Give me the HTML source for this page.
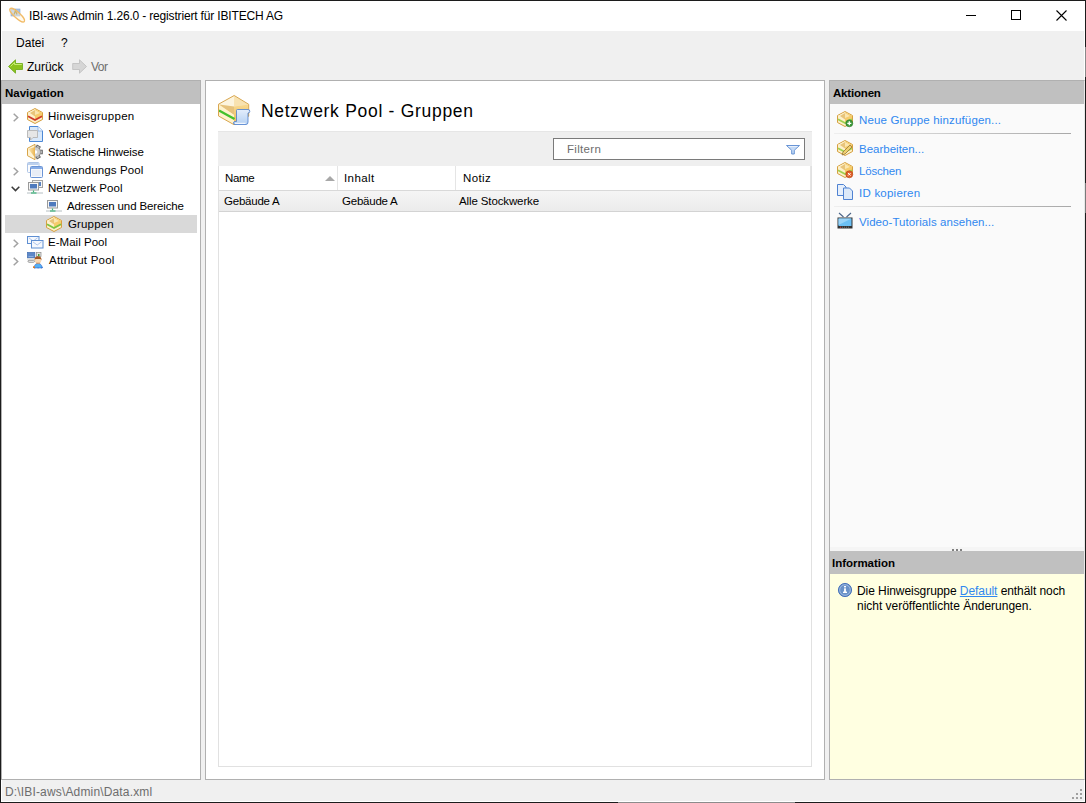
<!DOCTYPE html>
<html><head><meta charset="utf-8">
<style>
*{box-sizing:border-box;margin:0;padding:0}
html,body{width:1086px;height:803px;overflow:hidden;background:#f0f0f0;font-family:"Liberation Sans",sans-serif;color:#000;position:relative}
.a{position:absolute}
.t{position:absolute;white-space:nowrap;line-height:14px}
svg{position:absolute;overflow:visible}
.chev{position:absolute}
</style></head><body>
<svg width="0" height="0" style="left:0;top:0">
<defs>
 <linearGradient id="gold" x1="0" y1="0" x2="0" y2="1"><stop offset="0" stop-color="#fff6d8"/><stop offset="1" stop-color="#f3c86a"/></linearGradient>
 <linearGradient id="rowg" x1="0" y1="0" x2="0" y2="1"><stop offset="0" stop-color="#f6f6f6"/><stop offset="1" stop-color="#ebebeb"/></linearGradient>
 <linearGradient id="infog" x1="0" y1="0" x2="0" y2="1"><stop offset="0" stop-color="#8fb0dc"/><stop offset="1" stop-color="#3f6fb5"/></linearGradient>
 <g id="box">
  <path d="M8 0.5L15.5 4.5V11.5L8 15.5L0.5 11.5V4.5Z" fill="#fdf0c8" stroke="#d6a040" stroke-width="1"/>
  <path d="M1 4.8L8 1.2L8 8.5L1 9Z" fill="#fdf0cc"/>
  <path d="M3 5L8 2V8.5Z" fill="#e8c47a"/>
  <path d="M8 1.2L15 4.8V9L8 12.5Z" fill="#f6cc6c"/>
  <path d="M8 2L13 5L8 7Z" fill="#fbe6b0"/>
 </g>
</defs>
</svg>
<!-- window frame -->
<div class="a" style="left:0;top:0;width:1086px;height:803px;border:1px solid #1c1c1c"></div>
<div class="a" style="left:1px;top:1px;width:1084px;height:801px;border:1px solid #fff;border-top:none"></div>
<div class="a" style="left:1085px;top:47px;width:1px;height:30px;background:#8a8a8a"></div>
<div class="a" style="left:618px;top:802px;width:177px;height:1px;background:#8c8c8c"></div>
<div class="a" style="left:1085px;top:183px;width:1px;height:30px;background:#7a7a7a"></div>
<!-- title bar -->
<div class="a" style="left:1px;top:1px;width:1084px;height:30px;background:#fff"></div>
<!-- app icon -->
<svg style="left:9px;top:7px" width="16" height="16">
 <rect x="2" y="2" width="9" height="7" fill="#a8c4e6" stroke="#88a8d4" stroke-width="0.6"/>
 <path d="M5 7.5L6.5 3.5L8 7.5" fill="none" stroke="#9c7c18" stroke-width="1.2"/>
 <ellipse cx="8.2" cy="8.2" rx="9.6" ry="2.9" transform="rotate(42 8.2 8.2)" fill="#fff3dc" fill-opacity="0.45" stroke="#f2bc68" stroke-width="1.3"/>
</svg>
<!-- window buttons -->
<div class="a" style="left:966px;top:15px;width:10px;height:1px;background:#000"></div>
<div class="a" style="left:1011px;top:10px;width:10px;height:10px;border:1px solid #000"></div>
<svg style="left:1056px;top:10px" width="11" height="11"><path d="M0.5 0.5L10.5 10.5M10.5 0.5L0.5 10.5" stroke="#000" stroke-width="1.1"/></svg>

<!-- toolbar icons -->
<svg style="left:8px;top:59px" width="16" height="16">
 <path d="M0.5 7.5L7.5 0.8V4.5H14.5V10.5H7.5V14.2Z" fill="#8cc21e" stroke="#6aa814" stroke-width="0.8" stroke-linejoin="round"/>
 <path d="M2.5 7.5L6.5 3.5V5.5H13.8" fill="none" stroke="#c8ec70" stroke-width="1"/>
</svg>
<svg style="left:72px;top:59px" width="16" height="16">
 <path d="M14.5 7.5L7.5 0.8V4.5H0.7V10.5H7.5V14.2Z" fill="#d6d6d6" stroke="#bcbcbc" stroke-width="0.8" stroke-linejoin="round"/>
</svg>

<!-- LEFT PANEL -->
<div class="a" style="left:1px;top:80px;width:200px;height:700px;border:1px solid #b0b0b0;background:#fff"></div>
<div class="a" style="left:2px;top:81px;width:198px;height:23px;background:#c0c0c0"></div>
<!-- selection -->
<div class="a" style="left:5px;top:215px;width:192px;height:18px;background:#d9d9d9"></div>

<!-- CENTER PANEL -->
<div class="a" style="left:205px;top:80px;width:620px;height:700px;border:1px solid #b0b0b0;background:#fff"></div>
<!-- filter bar -->
<div class="a" style="left:218px;top:131px;width:594px;height:35px;background:#efefef;border-top:1px solid #e6e6e6"></div>
<div class="a" style="left:553px;top:138px;width:252px;height:22px;background:#fff;border:1px solid #7a7a7a"></div>
<!-- list -->
<div class="a" style="left:218px;top:166px;width:594px;height:601px;background:#fff;border:1px solid #e1e1e1;border-top:none"></div>
<div class="a" style="left:219px;top:190px;width:592px;height:1px;background:#d9d9d9"></div>
<div class="a" style="left:337px;top:166px;width:1px;height:24px;background:#e5e5e5"></div>
<div class="a" style="left:455px;top:166px;width:1px;height:24px;background:#e5e5e5"></div>
<div class="a" style="left:810px;top:166px;width:1px;height:24px;background:#e5e5e5"></div>
<div class="a" style="left:219px;top:191px;width:592px;height:20px;background:linear-gradient(#f5f5f5,#ebebeb)"></div>
<div class="a" style="left:219px;top:211px;width:592px;height:1px;background:#d3d3d3"></div>

<!-- RIGHT PANEL -->
<div class="a" style="left:829px;top:80px;width:256px;height:700px;border:1px solid #b0b0b0;border-right:1px solid #e8e8e8;background:#fafafa"></div>
<div class="a" style="left:830px;top:81px;width:254px;height:23px;background:#c0c0c0"></div>
<div class="a" style="left:834px;top:133px;width:237px;height:1px;background:linear-gradient(to right,#efefef,#cdcdcd 45%,#a8a8a8)"></div>
<div class="a" style="left:834px;top:206px;width:237px;height:1px;background:linear-gradient(to right,#efefef,#cdcdcd 45%,#a8a8a8)"></div>
<div class="a" style="left:830px;top:547px;width:254px;height:4px;background:#f5f5f5"></div>
<div class="a" style="left:952px;top:549px;width:2px;height:2px;background:#808080"></div>
<div class="a" style="left:956px;top:549px;width:2px;height:2px;background:#808080"></div>
<div class="a" style="left:960px;top:549px;width:2px;height:2px;background:#808080"></div>
<div class="a" style="left:830px;top:551px;width:254px;height:23px;background:#c0c0c0"></div>
<div class="a" style="left:830px;top:574px;width:254px;height:205px;background:#ffffe1"></div>


<!-- TREE -->
<svg style="left:13px;top:113px" width="6" height="9"><path d="M0.7 0.7L4.7 4.5L0.7 8.3" fill="none" stroke="#a2a2a2" stroke-width="1.5"/></svg>
<svg style="left:13px;top:167px" width="6" height="9"><path d="M0.7 0.7L4.7 4.5L0.7 8.3" fill="none" stroke="#a2a2a2" stroke-width="1.5"/></svg>
<svg style="left:11px;top:186px" width="9" height="6"><path d="M0.7 0.7L4.5 4.6L8.3 0.7" fill="none" stroke="#3c3c3c" stroke-width="1.5"/></svg>
<svg style="left:13px;top:239px" width="6" height="9"><path d="M0.7 0.7L4.7 4.5L0.7 8.3" fill="none" stroke="#a2a2a2" stroke-width="1.5"/></svg>
<svg style="left:13px;top:257px" width="6" height="9"><path d="M0.7 0.7L4.7 4.5L0.7 8.3" fill="none" stroke="#a2a2a2" stroke-width="1.5"/></svg>

<!-- Hinweisgruppen box red -->
<svg style="left:27px;top:108px" width="16" height="16">
 <use href="#box"/>
 <path d="M1 8.3L8 12L15 8.3" fill="none" stroke="#cf3a2a" stroke-width="1.8"/>
</svg>
<!-- Vorlagen -->
<svg style="left:27px;top:126px" width="16" height="16">
 <path d="M2.5 0.5H11L15.5 5V15.5H2.5Z" fill="#d8e8fa" stroke="#4c88d6" stroke-width="1"/>
 <path d="M11 0.5V5H15.5" fill="#eef4fc" stroke="#7aa4e0" stroke-width="0.7"/>
 <path d="M0.5 4.5H10.5V11.5H6L3.5 14V11.5H0.5Z" fill="#e6e6e6" stroke="#b4b4b4" stroke-width="0.9"/>
</svg>
<!-- Statische Hinweise -->
<svg style="left:27px;top:144px" width="16" height="16">
 <defs><clipPath id="rh"><rect x="8" y="-1" width="10" height="18"/></clipPath>
 <linearGradient id="sg" x1="0" y1="0" x2="1" y2="0"><stop offset="0" stop-color="#fbe8b8"/><stop offset="1" stop-color="#eab450"/></linearGradient></defs>
 <path d="M8 0.3L0.5 4.3V11.7L8 15.7Z" fill="#fff4d6" stroke="#d8a448" stroke-width="1"/>
 <path d="M1.3 5L8 3V13.5Z" fill="url(#sg)"/>
 <g clip-path="url(#rh)">
  <g fill="#c4c4c4" stroke="#5e5e5e" stroke-width="0.9">
   <rect x="12" y="6.2" width="3.3" height="3.6" transform="rotate(-62 8.5 8)"/>
   <rect x="12" y="6.2" width="3.3" height="3.6"/>
   <rect x="12" y="6.2" width="3.3" height="3.6" transform="rotate(62 8.5 8)"/>
  </g>
  <circle cx="8.5" cy="8" r="5" fill="#cfcfcf" stroke="#8a8a8a" stroke-width="0.7"/>
  <circle cx="8.5" cy="8" r="1.8" fill="#fff"/>
 </g>
</svg>
<!-- Anwendungs Pool -->
<svg style="left:27px;top:162px" width="16" height="16">
 <rect x="0.5" y="0.5" width="11.5" height="10" rx="1" fill="#fbfcfe" stroke="#adc4e6" stroke-width="1"/>
 <rect x="1" y="1" width="10.5" height="2" fill="#bdd1ee"/>
 <rect x="3.5" y="4.5" width="12" height="11" rx="1" fill="#f6f8fc" stroke="#6a94d6" stroke-width="1"/>
 <rect x="4" y="5" width="11" height="2" fill="#88ade6"/>
 <rect x="5" y="8" width="9" height="6" fill="#e8edf6"/>
</svg>
<!-- Netzwerk Pool -->
<svg style="left:27px;top:180px" width="16" height="16">
 <rect x="5.5" y="0.5" width="10" height="7" fill="#f6f6f6" stroke="#a4a4a4" stroke-width="1"/>
 <rect x="7" y="2" width="7" height="4" fill="#5a84c4"/>
 <rect x="1.5" y="2.5" width="10" height="7.5" fill="#f6f6f6" stroke="#9a9a9a" stroke-width="1"/>
 <rect x="3" y="4" width="7" height="4.5" fill="#4f7abd"/>
 <path d="M6.5 10.5V12.5" stroke="#3fb27a" stroke-width="1.2"/>
 <path d="M0 13H16" stroke="#b4bec2" stroke-width="1"/>
 <path d="M4 13H9.5" stroke="#3fb27a" stroke-width="1.2"/>
</svg>
<!-- Adressen -->
<svg style="left:46px;top:198px" width="16" height="16">
 <rect x="1.5" y="2.5" width="10" height="7.5" fill="#f6f6f6" stroke="#9a9a9a" stroke-width="1"/>
 <rect x="3" y="4" width="7" height="4.5" fill="#4f7abd"/>
 <path d="M6.5 10.5V12.5" stroke="#3fb27a" stroke-width="1.2"/>
 <path d="M0 13H16" stroke="#b4bec2" stroke-width="1"/>
 <path d="M4 13H9.5" stroke="#3fb27a" stroke-width="1.2"/>
</svg>
<!-- Gruppen -->
<svg style="left:46px;top:216px" width="16" height="16">
 <use href="#box"/>
 <path d="M1 8.3L8 12L15 8.3" fill="none" stroke="#7cc440" stroke-width="1.8"/>
</svg>
<!-- E-Mail Pool -->
<svg style="left:27px;top:234px" width="16" height="16">
 <rect x="0.5" y="2.5" width="11.5" height="7" fill="#f6f9fe" stroke="#5f8fd2" stroke-width="1"/>
 <path d="M1.8 3.8L6.2 7L10.6 3.8" fill="none" stroke="#9ab8e6" stroke-width="0.8"/>
 <rect x="4.5" y="6.5" width="11.5" height="7.5" fill="#f6f9fe" stroke="#5f8fd2" stroke-width="1"/>
 <path d="M5.8 7.8L10.2 11L14.6 7.8" fill="none" stroke="#9ab8e6" stroke-width="0.8"/>
</svg>
<!-- Attribut Pool -->
<svg style="left:27px;top:252px" width="16" height="16">
 <rect x="0.3" y="0.3" width="7.6" height="5.6" fill="#5d88c8" stroke="#3f6cb0" stroke-width="0.6"/>
 <rect x="1.5" y="4" width="5" height="0.8" fill="#9ab8e4"/>
 <rect x="0" y="6.3" width="7" height="1.4" fill="#dcdcdc"/>
 <path d="M2 8.3H6.5Q7.5 8.3 7.5 9.3Q7.5 10.3 6.5 10.3H2Q1 10.3 1 9.3Q1 8.3 2 8.3Z" fill="#eee" stroke="#888" stroke-width="0.8"/>
 <rect x="9.5" y="0.5" width="4.5" height="4" fill="#e4e4e4" stroke="#8a8a8a" stroke-width="0.7"/>
 <rect x="11" y="2" width="1.5" height="2" fill="#3aa040"/>
 <path d="M7 16Q7.5 11.5 11 11.5Q14.5 11.5 15.5 16Z" fill="#55b0f4" stroke="#1f4fc0" stroke-width="0.9" stroke-dasharray="0.9 0.5"/>
 <rect x="6" y="14.3" width="1.8" height="1.7" fill="#e07a20"/>
 <circle cx="11" cy="8.2" r="3.2" fill="#f8d8b4"/>
 <path d="M7.5 8.5Q7.3 4.3 11 4.3Q14.7 4.3 14.5 8.5L13.5 7H8.5Z" fill="#a45a24"/>
 <path d="M9 11.2H13" stroke="#c08050" stroke-width="0.8"/>
</svg>

<!-- BIG ICON -->
<svg style="left:218px;top:95px" width="32" height="32">
 <defs><linearGradient id="bgold" x1="0" y1="0" x2="0" y2="1"><stop offset="0" stop-color="#f7d890"/><stop offset="1" stop-color="#efbe58"/></linearGradient>
 <linearGradient id="bdoc" x1="0" y1="0" x2="0" y2="1"><stop offset="0" stop-color="#e4eefc"/><stop offset="1" stop-color="#b4d0f2"/></linearGradient></defs>
 <path d="M16.2 0.5L30.7 9.3V21.2L16 29.7L0.5 21V9.2Z" fill="#fdf0c8"/>
 <path d="M1 9.3L16.2 1L16 11.5Z" fill="#fcf4de"/>
 <path d="M16.2 1L30.3 9.5L16 11.5Z" fill="#f8e2b0"/>
 <path d="M1 9.5L16 11.5L16 20Z" fill="#e6c27c"/>
 <path d="M16 11.5L30.3 9.5V21L16 29.3Z" fill="url(#bgold)"/>
 <path d="M1 10L16 20V29.3L1 20.8Z" fill="#fff2cc"/>
 <path d="M1 15.5L16.5 24" stroke="#44c02c" stroke-width="2.4"/>
 <path d="M16.2 0.5L30.7 9.3V21.2L16 29.7L0.5 21V9.2Z" fill="none" stroke="#d8a650" stroke-width="1"/>
 <path d="M19.5 14.5H30Q31.8 14.5 31.8 16.3Q31.8 18 30 18V27Q30 29.5 28 29.5H17Q15.5 29.5 15.5 28Q15.5 26.5 17 26.5H18.5V15.5Q18.5 14.5 19.5 14.5Z" fill="url(#bdoc)" stroke="#4a7ccc" stroke-width="0.8"/>
 <path d="M17 28.3H27.5" stroke="#fff" stroke-width="1"/>
</svg>

<!-- funnel -->
<svg style="left:786px;top:145px" width="14" height="10">
 <path d="M0.5 0.5H13.5L8.3 5.3V9H5.7V5.3Z" fill="#c4daf6" stroke="#5a8ad0" stroke-width="0.9" stroke-linejoin="round"/>
 <path d="M2.5 1.5H11.5" stroke="#e8f0fc" stroke-width="1"/>
</svg>
<!-- sort arrow -->
<svg style="left:325px;top:176px" width="10" height="5"><path d="M0 5H10L5 0Z" fill="#a8a8a8"/></svg>

<!-- ACTION ICONS -->
<svg style="left:837px;top:111px" width="16" height="16">
 <use href="#box"/>
 <path d="M1 8.3L8 12L15 8.3" fill="none" stroke="#9fd050" stroke-width="1.8"/>
 <circle cx="12.3" cy="12.3" r="3.5" fill="#3e9a3a" stroke="#2a7a2a" stroke-width="0.6"/>
 <path d="M12.3 10.3V14.3M10.3 12.3H14.3" stroke="#fff" stroke-width="1.3"/>
</svg>
<svg style="left:837px;top:140px" width="16" height="16">
 <use href="#box"/>
 <path d="M1 8.3L8 12L15 8.3" fill="none" stroke="#9fd050" stroke-width="1.8"/>
 <path d="M5 15L6 12L13 5L15 7L8 14Z" fill="#f0d070" stroke="#8a6a30" stroke-width="0.7"/>
</svg>
<svg style="left:837px;top:162px" width="16" height="16">
 <use href="#box"/>
 <path d="M1 8.3L8 12L15 8.3" fill="none" stroke="#9fd050" stroke-width="1.8"/>
 <circle cx="12.3" cy="12.3" r="3.5" fill="#e0602a" stroke="#b04010" stroke-width="0.6"/>
 <path d="M11 11L13.6 13.6M13.6 11L11 13.6" stroke="#fff" stroke-width="1"/>
</svg>
<svg style="left:837px;top:184px" width="16" height="16">
 <path d="M0.5 0.5H6.5L9 3V11.5H0.5Z" fill="#e6effb" stroke="#4f82d2" stroke-width="1"/>
 <path d="M6.5 4H12.5L15.5 7V15.5H6.5Z" fill="#dce9f9" stroke="#4f82d2" stroke-width="1"/>
</svg>
<svg style="left:837px;top:213px" width="16" height="16">
 <path d="M2 0L6.5 4M14 0L9.5 4" fill="none" stroke="#4a6488" stroke-width="1.1"/>
 <rect x="0.5" y="4.5" width="15" height="11" fill="#333"/>
 <rect x="1.5" y="5.5" width="13" height="7.5" fill="#6cc0f4"/>
 <path d="M1.5 5.5H14.5L1.5 12Z" fill="#9ad4f8"/>
 <path d="M3 14.2H13" stroke="#888" stroke-width="0.8" stroke-dasharray="1 1"/>
 <rect x="3" y="13.8" width="1.2" height="0.9" fill="#e02020"/>
</svg>

<!-- info icon -->
<svg style="left:838px;top:583px" width="14" height="14">
 <circle cx="7" cy="7" r="6.6" fill="#6a92c8" stroke="#3d6ab8" stroke-width="0.9"/>
 <circle cx="7" cy="7" r="5.3" fill="none" stroke="#a9c3e6" stroke-width="0.8"/>
 <rect x="6" y="3" width="2" height="1.4" fill="#fff"/>
 <rect x="6.1" y="5.3" width="1.8" height="3.8" fill="#fff"/>
 <rect x="5" y="8.6" width="4" height="1.4" fill="#fff"/>
</svg>

<!-- resize grip -->
<svg style="left:1072px;top:789px" width="12" height="12">
 <g fill="#a0a0a0">
 <rect x="8" y="0" width="2" height="2"/>
 <rect x="4" y="4" width="2" height="2"/><rect x="8" y="4" width="2" height="2"/>
 <rect x="0" y="8" width="2" height="2"/><rect x="4" y="8" width="2" height="2"/><rect x="8" y="8" width="2" height="2"/>
 </g>
</svg>

<div class="t" style="left:29.00px;top:9.00px;font-size:12px;font-weight:400;color:#000;letter-spacing:-0.165px;">IBI-aws Admin 1.26.0 - registriert für IBITECH AG</div>
<div class="t" style="left:16.00px;top:36.00px;font-size:12px;font-weight:400;color:#000;letter-spacing:0.025px;">Datei</div>
<div class="t" style="left:61.00px;top:36.00px;font-size:12px;font-weight:400;color:#000;letter-spacing:-0.400px;">?</div>
<div class="t" style="left:27.00px;top:60.00px;font-size:12px;font-weight:400;color:#000;letter-spacing:-0.020px;">Zurück</div>
<div class="t" style="left:91.00px;top:60.00px;font-size:12px;font-weight:400;color:#6d6d6d;letter-spacing:-0.500px;">Vor</div>
<div class="t" style="left:5.00px;top:86.00px;font-size:11.5px;font-weight:700;color:#000;letter-spacing:-0.011px;">Navigation</div>
<div class="t" style="left:48.00px;top:109.00px;font-size:11.5px;font-weight:400;color:#000;letter-spacing:0.292px;">Hinweisgruppen</div>
<div class="t" style="left:49.00px;top:127.00px;font-size:11.5px;font-weight:400;color:#000;letter-spacing:-0.043px;">Vorlagen</div>
<div class="t" style="left:48.00px;top:145.00px;font-size:11.5px;font-weight:400;color:#000;letter-spacing:-0.076px;">Statische Hinweise</div>
<div class="t" style="left:49.00px;top:163.00px;font-size:11.5px;font-weight:400;color:#000;letter-spacing:0.114px;">Anwendungs Pool</div>
<div class="t" style="left:48.00px;top:181.00px;font-size:11.5px;font-weight:400;color:#000;letter-spacing:0.025px;">Netzwerk Pool</div>
<div class="t" style="left:67.00px;top:199.00px;font-size:11.5px;font-weight:400;color:#000;letter-spacing:-0.130px;">Adressen und Bereiche</div>
<div class="t" style="left:68.00px;top:217.00px;font-size:11.5px;font-weight:400;color:#000;letter-spacing:0.150px;">Gruppen</div>
<div class="t" style="left:48.00px;top:235.00px;font-size:11.5px;font-weight:400;color:#000;letter-spacing:0.030px;">E-Mail Pool</div>
<div class="t" style="left:49.00px;top:253.00px;font-size:11.5px;font-weight:400;color:#000;letter-spacing:0.225px;">Attribut Pool</div>
<div class="t" style="left:261.00px;top:104.00px;font-size:17.5px;font-weight:400;color:#000;letter-spacing:0.705px;">Netzwerk Pool - Gruppen</div>
<div class="t" style="left:567.00px;top:142.00px;font-size:11.5px;font-weight:400;color:#6d6d6d;letter-spacing:0.317px;">Filtern</div>
<div class="t" style="left:225.00px;top:171.00px;font-size:11.5px;font-weight:400;color:#000;letter-spacing:-0.333px;">Name</div>
<div class="t" style="left:344.00px;top:171.00px;font-size:11.5px;font-weight:400;color:#000;letter-spacing:0.420px;">Inhalt</div>
<div class="t" style="left:463.00px;top:171.00px;font-size:11.5px;font-weight:400;color:#000;letter-spacing:0.375px;">Notiz</div>
<div class="t" style="left:224.00px;top:194.00px;font-size:11.5px;font-weight:400;color:#000;letter-spacing:-0.225px;">Gebäude A</div>
<div class="t" style="left:342.00px;top:194.00px;font-size:11.5px;font-weight:400;color:#000;letter-spacing:-0.225px;">Gebäude A</div>
<div class="t" style="left:459.00px;top:194.00px;font-size:11.5px;font-weight:400;color:#000;letter-spacing:-0.121px;">Alle Stockwerke</div>
<div class="t" style="left:833.00px;top:86.00px;font-size:11.5px;font-weight:700;color:#000;letter-spacing:-0.186px;">Aktionen</div>
<div class="t" style="left:859.00px;top:113.00px;font-size:11.5px;font-weight:400;color:#3088f0;letter-spacing:0.162px;">Neue Gruppe hinzufügen...</div>
<div class="t" style="left:859.00px;top:142.00px;font-size:11.5px;font-weight:400;color:#3088f0;letter-spacing:0.000px;">Bearbeiten...</div>
<div class="t" style="left:859.00px;top:164.00px;font-size:11.5px;font-weight:400;color:#3088f0;letter-spacing:-0.167px;">Löschen</div>
<div class="t" style="left:859.00px;top:186.00px;font-size:11.5px;font-weight:400;color:#3088f0;letter-spacing:0.230px;">ID kopieren</div>
<div class="t" style="left:859.00px;top:215.00px;font-size:11.5px;font-weight:400;color:#3088f0;letter-spacing:0.068px;">Video-Tutorials ansehen...</div>
<div class="t" style="left:832.00px;top:556.00px;font-size:11.5px;font-weight:700;color:#000;letter-spacing:-0.030px;">Information</div>
<div class="t" style="left:857.00px;top:584.00px;font-size:12px;font-weight:400;color:#000;letter-spacing:-0.068px;">Die Hinweisgruppe <u style='color:#3088f0'>Default</u> enthält noch</div>
<div class="t" style="left:857.00px;top:599.00px;font-size:12px;font-weight:400;color:#000;letter-spacing:-0.016px;">nicht veröffentlichte Änderungen.</div>
<div class="t" style="left:5.00px;top:785.00px;font-size:12px;font-weight:400;color:#6d6d6d;letter-spacing:0.158px;">D:\IBI-aws\Admin\Data.xml</div>
</body></html>
